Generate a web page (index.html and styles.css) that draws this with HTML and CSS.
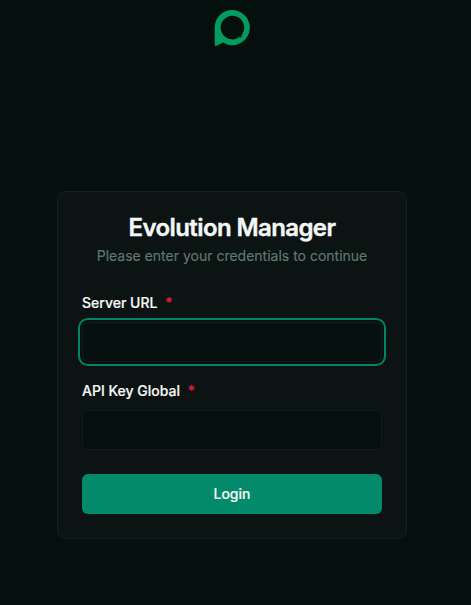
FILE: index.html
```html
<!DOCTYPE html>
<html lang="en">
<head>
<meta charset="utf-8">
<title>Evolution Manager</title>
<link rel="stylesheet" href="styles.css">
</head>
<body>
<div class="page">
  <header class="brand">
    <svg class="logo" viewBox="0 0 38 38" aria-hidden="true">
      <path fill-rule="evenodd" d="M19.4 1A17.6 17.6 0 1 1 10 33.6L3.6 36.8Q1.7 37.6 1.7 35.8V18.5A17.5 17.5 0 0 1 19.4 1ZM19.4 6.8A11.8 11.8 0 1 0 24.6 29.2L25.2 28L26.8 28.6L28.4 28.2L28.7 26L29.7 24.4A11.8 11.8 0 0 0 19.4 6.8Z"/>
    </svg>
  </header>
  <main class="card">
    <h1 class="title">Evolution Manager</h1>
    <p class="subtitle">Please enter your credentials to continue</p>
    <form class="form">
      <label class="label" for="server">Server URL <span class="required">*</span></label>
      <input class="input input-active" id="server" type="text">
      <label class="label" for="key">API Key Global <span class="required">*</span></label>
      <input class="input" id="key" type="password">
      <button class="button" type="button">Login</button>
    </form>
  </main>
</div>
</body>
</html>
```
FILE: styles.css
```css
* { box-sizing: border-box; }
body {
  margin: 0;
  height: 605px;
  overflow: hidden;
  background: #05100e;
  color: #f5f7f7;
  font-family: Inter, "Liberation Sans", sans-serif;
  font-size: 14px;
}
.page {
  width: 464px;
  display: flex;
  flex-direction: column;
  align-items: center;
}
.brand {
  height: 191px;
  padding-top: 9px;
}
.logo {
  display: block;
  width: 38px;
  height: 38px;
  fill: #029c61;
}
.card {
  width: 350px;
  height: 348px;
  padding: 20px 24px 24px;
  border: 1px solid #11201d;
  border-radius: 8px;
  background: #0b1412;
}
.title {
  margin: 0;
  font-size: 24px;
  line-height: 32px;
  font-weight: 600;
  letter-spacing: -0.6px;
  text-align: center;
  -webkit-text-stroke: 0.4px currentColor;
}
.subtitle {
  margin: 2px 0 0;
  line-height: 20px;
  color: #617771;
  text-align: center;
  -webkit-text-stroke: 0.15px currentColor;
}
.form {
  display: flex;
  flex-direction: column;
  margin-top: 30px;
}
.label {
  line-height: 14px;
  font-weight: 500;
  -webkit-text-stroke: 0.2px currentColor;
}
.required {
  margin-left: 4px;
  color: #dc1f3c;
}
.input {
  height: 40px;
  margin: 12px 0 22px;
  padding: 8px 12px;
  border: 1px solid #0e1d1a;
  border-radius: 6px;
  outline: none;
  background: #05100e;
  color: inherit;
  font: inherit;
}
.input-active {
  box-shadow: 0 0 0 2px #05100e, 0 0 0 4px #028667;
}
.button {
  height: 40px;
  margin-top: 2px;
  padding: 0 0 2px;
  border: 0;
  border-radius: 6px;
  background: #028a6a;
  color: #f5f7f7;
  font: inherit;
  font-weight: 500;
  -webkit-text-stroke: 0.2px currentColor;
}
```
